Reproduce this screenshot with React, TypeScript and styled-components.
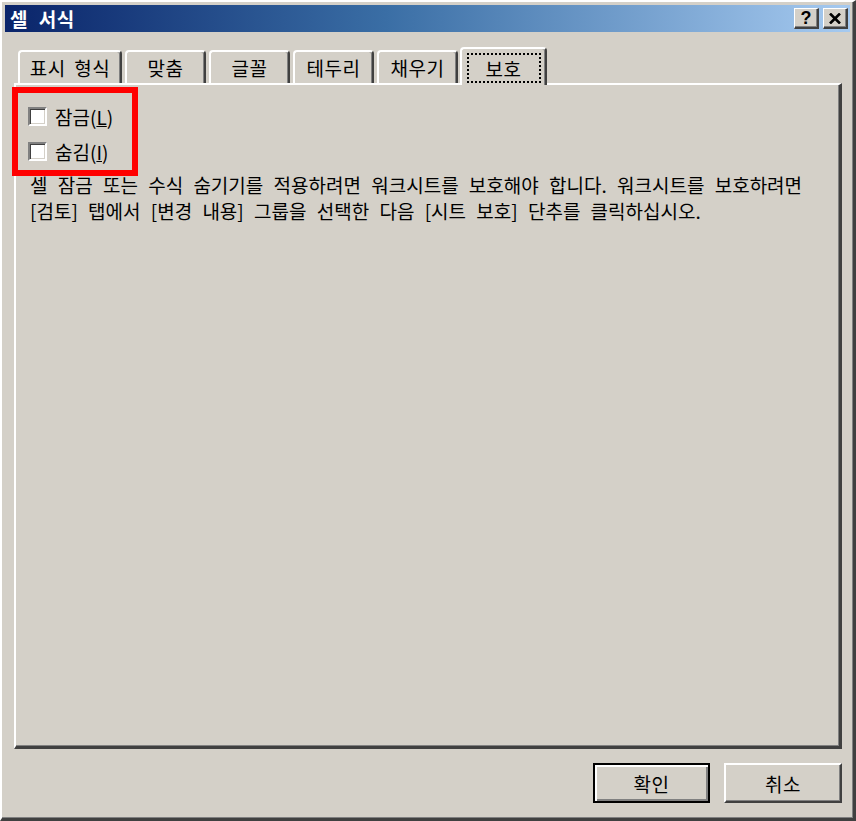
import React from "react";
import styled, { createGlobalStyle } from "styled-components";

const FONT = `"Noto Sans CJK KR", "Noto Sans", sans-serif`;

const GlobalStyle = createGlobalStyle`
  html, body { margin: 0; padding: 0; background: #d4d0c8; }
  body { font-family: ${FONT}; }
  * { box-sizing: border-box; }
`;

const Window = styled.div`
  position: relative;
  width: 856px;
  height: 821px;
  background: #d4d0c8;
  border-style: solid;
  border-width: 2px 3px 3px 2px;
  border-color: #ffffff #404040 #404040 #ffffff;
  box-shadow: inset -1px -1px 0 #808080;
  padding: 3px 3px 2px 3px;
  display: flex;
  flex-direction: column;
  font-family: ${FONT};
  color: #000;
`;

const TitleBar = styled.div`
  height: 27px;
  flex: none;
  display: flex;
  align-items: center;
  padding: 0 2px 0 5px;
  background: linear-gradient(to right, #0a246a 0%, #3a6ea5 45%, #a6caf0 100%);
`;

const TitleText = styled.span`
  color: #fff;
  font-weight: 700;
  font-size: 19px;
  line-height: 27px;
  word-spacing: 6px;
  letter-spacing: 0.5px;
`;

const TitleButtons = styled.div`
  margin-left: auto;
  display: flex;
  gap: 4px;
`;

const TitleButton = styled.div`
  width: 25px;
  height: 21px;
  display: flex;
  align-items: center;
  justify-content: center;
  background: #d4d0c8;
  border-style: solid;
  border-width: 1px 2px 2px 1px;
  border-color: #ffffff #404040 #404040 #ffffff;
  box-shadow: inset -1px -1px 0 #808080;
  font-family: "Liberation Sans", Arial, sans-serif;
  font-weight: 900;
  font-size: 18px;
  line-height: 1;
`;

const Body = styled.div`
  flex: 1;
  display: flex;
  flex-direction: column;
  padding: 15px 8px 13px 9px;
`;

const TabRow = styled.div`
  position: relative;
  z-index: 1;
  height: 36px;
  flex: none;
  display: flex;
  align-items: flex-end;
  padding-left: 4px;
`;

const Tab = styled.div<{ $w: number; $active?: boolean }>`
  position: relative;
  width: ${(p) => (p.$active ? p.$w + 6 : p.$w)}px;
  height: ${(p) => (p.$active ? 38 : 33)}px;
  margin-right: 3px;
  margin-left: ${(p) => (p.$active ? -1 : 0)}px;
  margin-bottom: ${(p) => (p.$active ? -2 : 0)}px;
  display: flex;
  align-items: center;
  justify-content: center;
  background: #d4d0c8;
  border-style: solid;
  border-width: 2px 2px 0 2px;
  border-color: #ffffff #404040 transparent #ffffff;
  border-top-left-radius: 4px;
  border-top-right-radius: 4px;
  box-shadow: inset -1px 0 0 #808080;
  font-size: 19px;
  letter-spacing: 0.5px;
  word-spacing: 4px;
  padding-bottom: ${(p) => (p.$active ? 2 : 0)}px;
`;

const FocusRing = styled.span`
  display: flex;
  align-items: center;
  justify-content: center;
  width: 74px;
  height: 30px;
  margin-top: 4px;
  border: 2px dotted #000;
`;

const Panel = styled.div`
  flex: 1;
  background: #d4d0c8;
  border-style: solid;
  border-width: 2px 3px 3px 2px;
  border-color: #ffffff #404040 #404040 #ffffff;
  box-shadow: inset -1px -1px 0 #808080;
  padding: 14px 12px 0 12px;
`;

const CheckRow = styled.label`
  height: 35px;
  display: flex;
  align-items: center;
  gap: 8px;
  font-size: 19px;
`;

const CheckBox = styled.span`
  width: 19px;
  height: 19px;
  background: #fff;
  border-style: solid;
  border-width: 2px;
  border-color: #808080 #ffffff #ffffff #808080;
  box-shadow: inset 1px 1px 0 #404040, inset -1px -1px 0 #d4d0c8;
`;

const Mnemonic = styled.span`
  text-decoration: underline;
`;

const Note = styled.p`
  margin: 0;
  padding: 3px 0 0 2px;
  font-size: 19px;
  line-height: 26px;
  word-spacing: 6px;
`;

const ButtonRow = styled.div`
  flex: none;
  display: flex;
  justify-content: flex-end;
  gap: 14px;
  margin-top: 14px;
  height: 40px;
`;

const DialogButton = styled.div<{ $default?: boolean; $w: number }>`
  width: ${(p) => p.$w}px;
  height: 40px;
  display: flex;
  align-items: center;
  justify-content: center;
  background: #d4d0c8;
  font-size: 19px;
  letter-spacing: 0.5px;
  border-style: solid;
  border-width: 2px;
  border-color: ${(p) =>
    p.$default ? "#000 #000 #000 #000" : "#ffffff #404040 #404040 #ffffff"};
  box-shadow: ${(p) =>
    p.$default
      ? "inset 2px 2px 0 #ffffff, inset -2px -2px 0 #808080"
      : "inset -1px -1px 0 #808080"};
`;

const Annotation = styled.div`
  position: absolute;
  left: 10px;
  top: 85px;
  width: 126px;
  height: 89px;
  border: 6px solid #ff0000;
  pointer-events: none;
`;

const tabs = [
  { label: "표시 형식", w: 104 },
  { label: "맞춤", w: 81 },
  { label: "글꼴", w: 81 },
  { label: "테두리", w: 81 },
  { label: "채우기", w: 81 },
];

export default function App() {
  return (
    <>
      <GlobalStyle />
      <Window>
        <TitleBar>
          <TitleText>셀 서식</TitleText>
          <TitleButtons>
            <TitleButton>?</TitleButton>
            <TitleButton>
              <svg width="12" height="11" viewBox="0 0 12 11">
                <path d="M1 0.5 L11 10.5 M11 0.5 L1 10.5" stroke="#000" strokeWidth="2.6" />
              </svg>
            </TitleButton>
          </TitleButtons>
        </TitleBar>
        <Body>
          <TabRow>
            {tabs.map((t) => (
              <Tab key={t.label} $w={t.w}>
                {t.label}
              </Tab>
            ))}
            <Tab $w={81} $active>
              <FocusRing>보호</FocusRing>
            </Tab>
          </TabRow>
          <Panel>
            <CheckRow>
              <CheckBox />
              <span>
                잠금(<Mnemonic>L</Mnemonic>)
              </span>
            </CheckRow>
            <CheckRow>
              <CheckBox />
              <span>
                숨김(<Mnemonic>I</Mnemonic>)
              </span>
            </CheckRow>
            <Note>
              셀 잠금 또는 수식 숨기기를 적용하려면 워크시트를 보호해야 합니다. 워크시트를 보호하려면
              <br />
              [검토] 탭에서 [변경 내용] 그룹을 선택한 다음 [시트 보호] 단추를 클릭하십시오.
            </Note>
          </Panel>
          <ButtonRow>
            <DialogButton $default $w={117}>확인</DialogButton>
            <DialogButton $w={118}>취소</DialogButton>
          </ButtonRow>
        </Body>
        <Annotation />
      </Window>
    </>
  );
}
